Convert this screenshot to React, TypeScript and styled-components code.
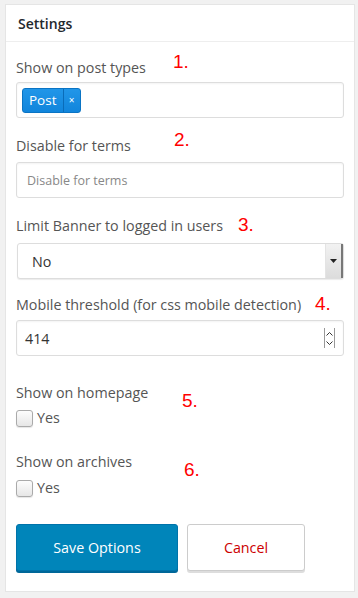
import React from 'react'
import styled, { createGlobalStyle } from 'styled-components'

const GlobalStyle = createGlobalStyle`
  html, body {
    margin: 0;
    padding: 0;
    background: #f1f1f1;
    font-family: 'Open Sans', 'Liberation Sans', sans-serif;
    color: #444;
  }
`

const Page = styled.div`
  padding: 4px 4px 0 5px;
  width: 358px;
  height: 598px;
  box-sizing: border-box;
`

const Card = styled.div`
  width: 350px;
  height: 588px;
  box-sizing: border-box;
  background: #fff;
  border: 1px solid #e5e5e5;
`

const Header = styled.h2`
  margin: 0;
  height: 37px;
  box-sizing: border-box;
  padding: 0 12px;
  display: flex;
  align-items: center;
  font-size: 14px;
  font-weight: 600;
  color: #23282d;
  border-bottom: 1px solid #eee;
`

const Body = styled.div`
  padding: 16px 10px 0 10px;
`

const Field = styled.div<{ $gap?: number }>`
  position: relative;
  margin-bottom: ${(p) => p.$gap ?? 18}px;
`

const Label = styled.div<{ $space?: number }>`
  font-size: 14.3px;
  line-height: 20px;
  color: #555;
  margin-bottom: ${(p) => p.$space ?? 5}px;
`

const Note = styled.span<{ $x: number; $y: number }>`
  position: absolute;
  left: ${(p) => p.$x}px;
  top: ${(p) => p.$y}px;
  font-family: 'Liberation Sans', Arial, sans-serif;
  font-size: 19px;
  line-height: 20px;
  color: #f00;
`

const Box = styled.div`
  height: 36px;
  box-sizing: border-box;
  border: 1px solid #ddd;
  border-radius: 3px;
  box-shadow: inset 0 1px 2px rgba(0, 0, 0, 0.05);
  display: flex;
  align-items: center;
  background: #fff;
`

const TagBox = styled(Box)`
  padding-left: 5px;
`

const Tag = styled.div`
  display: flex;
  height: 23px;
  border: 1px solid #0a74c4;
  border-radius: 3px;
  background: linear-gradient(#2196e8, #1185dc);
  color: #fff;
  font-size: 13.5px;
  overflow: hidden;
`

const TagText = styled.span`
  padding: 0 6px;
  line-height: 23px;
`

const TagClose = styled.span`
  width: 16px;
  border-left: 1px solid #0a6cb8;
  text-align: center;
  font-size: 10px;
  line-height: 22px;
`

const TextBox = styled(Box)`
  padding-left: 10px;
  font-size: 12.5px;
  color: #888;
`

const Select = styled(Box)`
  position: relative;
  justify-content: space-between;
  margin-left: 1px;
  padding-left: 14px;
  font-size: 14.3px;
  color: #333;
  box-shadow: 0 1px 1px rgba(0, 0, 0, 0.08);
`

const Arrow = styled.div`
  width: 15px;
  height: 34px;
  background: linear-gradient(#f2f2f2, #dcdcdc);
  border-left: 1px solid #e4e4e4;
  border-right: 2px solid #777;
  display: flex;
  align-items: center;
  justify-content: center;
`

const NumberBox = styled(Box)`
  justify-content: space-between;
  padding: 0 8px 0 8px;
  font-size: 14.3px;
  color: #333;
`

const Spinner = styled.div`
  display: flex;
  flex-direction: column;
  width: 9px;
  height: 20px;
  border-left: 1px solid #999;
  border-right: 1px solid #999;
  justify-content: space-around;
  align-items: center;
`

const Check = styled.div`
  display: flex;
  align-items: center;
  gap: 4px;
  font-size: 14.3px;
  line-height: 18px;
  color: #555;
`

const CheckMark = styled.span`
  width: 15px;
  height: 15px;
  border: 1px solid #aaa;
  border-radius: 3px;
  background: linear-gradient(#fdfdfd, #e6e6e6);
  box-shadow: 0 1px 1px rgba(0, 0, 0, 0.1);
`

const Actions = styled.div`
  display: flex;
  gap: 9px;
`

const Button = styled.button<{ $primary?: boolean }>`
  height: 47px;
  box-sizing: border-box;
  font-family: 'Open Sans', 'Liberation Sans', sans-serif;
  font-size: 14.3px;
  border-radius: 3px;
  cursor: pointer;
  width: ${(p) => (p.$primary ? 162 : 118)}px;
  background: ${(p) => (p.$primary ? '#0085ba' : '#fff')};
  color: ${(p) => (p.$primary ? '#fff' : '#c00')};
  border: 1px solid ${(p) => (p.$primary ? '#0073aa' : '#ccc')};
  box-shadow: ${(p) => (p.$primary ? '0 2px 0 #006799' : '0 2px 0 #ddd')};
`

export default function App() {
  return (
    <>
      <GlobalStyle />
      <Page>
        <Card>
          <Header>Settings</Header>
          <Body>
            <Field>
              <Label $space={4}>Show on post types</Label>
              <Note $x={157} $y={-6}>1.</Note>
              <TagBox>
                <Tag>
                  <TagText>Post</TagText>
                  <TagClose>×</TagClose>
                </Tag>
              </TagBox>
            </Field>
            <Field>
              <Label $space={6}>Disable for terms</Label>
              <Note $x={158} $y={-6}>2.</Note>
              <TextBox>Disable for terms</TextBox>
            </Field>
            <Field $gap={16}>
              <Label $space={7}>Limit Banner to logged in users</Label>
              <Note $x={222} $y={-1}>3.</Note>
              <Select>
                No
                <Arrow>
                  <svg width="7" height="4" viewBox="0 0 7 4">
                    <path d="M0 0h7L3.5 4z" fill="#222" />
                  </svg>
                </Arrow>
              </Select>
            </Field>
            <Field $gap={27}>
              <Label $space={5}>Mobile threshold (for css mobile detection)</Label>
              <Note $x={299} $y={-1}>4.</Note>
              <NumberBox>
                414
                <Spinner>
                  <svg width="7" height="5" viewBox="0 0 7 5">
                    <path d="M0.5 4.5L3.5 1.5L6.5 4.5" fill="none" stroke="#333" />
                  </svg>
                  <svg width="7" height="5" viewBox="0 0 7 5">
                    <path d="M0.5 0.5L3.5 3.5L6.5 0.5" fill="none" stroke="#333" />
                  </svg>
                </Spinner>
              </NumberBox>
            </Field>
            <Field $gap={25}>
              <Label $space={6}>Show on homepage</Label>
              <Note $x={166} $y={8}>5.</Note>
              <Check>
                <CheckMark />
                Yes
              </Check>
            </Field>
            <Field $gap={27}>
              <Label $space={7}>Show on archives</Label>
              <Note $x={168} $y={8}>6.</Note>
              <Check>
                <CheckMark />
                Yes
              </Check>
            </Field>
            <Actions>
              <Button $primary>Save Options</Button>
              <Button>Cancel</Button>
            </Actions>
          </Body>
        </Card>
      </Page>
    </>
  )
}
